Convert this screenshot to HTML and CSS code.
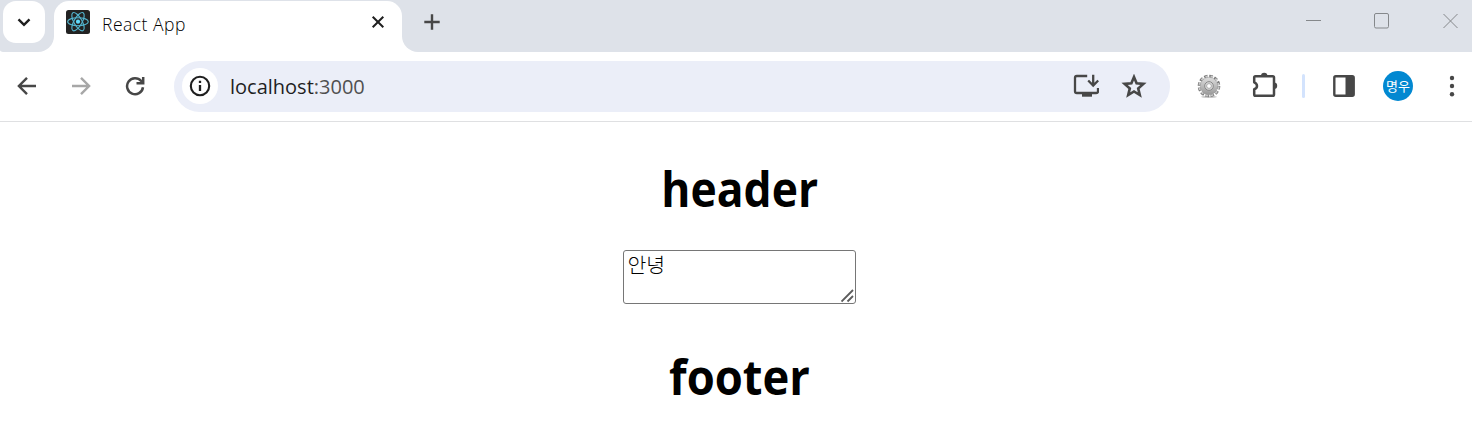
FILE: index.html
```html
<!DOCTYPE html>
<html lang="ko">
<head>
<meta charset="utf-8">
<title>React App</title>
<link rel="stylesheet" href="styles.css">
</head>
<body>
<div class="tabstrip">
  <div class="strip-left">
    <div class="tab-search"><svg width="42" height="42" viewBox="0 0 42 42"><path class="ink" d="M15.5 18.3l5.5 5.5 5.5-5.5" stroke-width="2.4"/></svg></div>
  </div>
  <div class="tab-slot">
    <div class="tab">
      <svg class="favicon" width="24" height="24" viewBox="0 0 24 24">
        <rect width="24" height="24" rx="2.5" fill="#222"/>
        <g fill="none" stroke="#53b5cf" stroke-width="1.15"><ellipse cx="12" cy="11.7" rx="10.3" ry="4"/><ellipse cx="12" cy="11.7" rx="10.3" ry="4" transform="rotate(60 12 11.7)"/><ellipse cx="12" cy="11.7" rx="10.3" ry="4" transform="rotate(120 12 11.7)"/></g>
        <circle cx="12" cy="11.7" r="2.1" fill="#61dafb"/>
      </svg>
      <span class="tab-title">React App</span>
      <svg class="tab-close" width="14" height="14" viewBox="0 0 14 14"><path class="ink" d="M1.7 1.7l10.6 10.6M12.3 1.7L1.7 12.3" stroke-width="2"/></svg>
    </div>
  </div>
  <div class="strip-right">
    <svg class="new-tab" width="16" height="16" viewBox="0 0 16 16"><path class="gray" d="M8 .3v15.4M.3 8h15.4" stroke-width="2.4"/></svg>
    <svg class="window-controls" width="156" height="18" viewBox="0 0 156 18"><g fill="none" stroke="#85888b"><path d="M2 8.5h15"/><rect x="70.5" y="1.5" width="14" height="14.5" rx="1.5"/><path d="M139.5 2l14 14M153.500 2l-14 14"/></g></svg>
  </div>
</div>
<div class="toolbar">
  <svg class="nav" width="20" height="20" viewBox="0 0 20 20"><path class="gray" d="M19 10H2.3M10 1.8L1.9 10l8.1 8.2" stroke-width="2.4"/></svg>
  <svg class="nav" width="20" height="20" viewBox="0 0 20 20"><path d="M1 10h16.7M10 1.8l8.1 8.2-8.1 8.2" fill="none" stroke="#a7a7a7" stroke-width="2.4"/></svg>
  <svg class="nav reload" width="20" height="20" viewBox="0 0 20 20"><path class="gray" d="M18 11.3A8 8 0 1 1 16.2 5L18 7M18.2 1v6.2h-6.7" stroke-width="2.5"/></svg>
  <div class="omnibox">
    <div class="site-info"><svg width="36" height="36" viewBox="0 0 36 36"><circle class="ink" cx="18" cy="18" r="9.2" stroke-width="2.1"/><path class="ink" d="M18 17v6M18 12.8v2.3" stroke-width="2.3"/></svg></div>
    <span class="url">localhost<span class="port">:3000</span></span>
    <svg class="install" width="26" height="24" viewBox="0 0 26 24"><path class="gray" d="M14.2 2H3.8Q2 2 2 3.8v13.4Q2 19 3.8 19h19.4Q25 19 25 17.2V14" stroke-width="2.3"/><path fill="#474747" d="M9 19h10v3.7H9z"/><path class="gray" d="M20.2.8v10M15.2 6.5l5 5 5-5" stroke-width="2.3"/></svg>
    <svg class="star" width="26" height="25" viewBox="0 0 26 25"><path class="gray" d="M13 3l2.6 6.3 6.8.6-5.2 4.5 1.6 6.7-5.8-3.6-5.8 3.6 1.6-6.7L3.6 9.9l6.8-.6z" stroke-width="2.6"/></svg>
  </div>
  <svg class="gear" width="24" height="25" viewBox="0 0 24 25">
    <defs><linearGradient id="metal" x2="0" y2="1"><stop stop-color="#dedede"/><stop offset=".5" stop-color="#bcbcbc"/><stop offset="1" stop-color="#999"/></linearGradient></defs>
    <ellipse cx="12" cy="22.8" rx="8" ry="1.3" fill="#ccc"/>
    <circle cx="12" cy="12" r="9.8" fill="none" stroke="#777" stroke-width="3" stroke-dasharray="3.4 1.73"/>
    <circle cx="12" cy="12" r="9.6" fill="none" stroke="#c8c8c8" stroke-width="2" stroke-dasharray="2.6 2.53" stroke-dashoffset="-.4"/>
    <circle cx="12" cy="12" r="8.7" fill="url(#metal)" stroke="#999" stroke-width=".5"/>
    <circle cx="12" cy="12" r="4.3" fill="#ddd" stroke="#858585"/>
    <circle cx="12" cy="12" r="2.4" fill="#fff" stroke="#999" stroke-width=".8"/>
  </svg>
  <svg class="puzzle" width="26" height="26" viewBox="0 0 26 26"><path class="gray" stroke-linejoin="round" d="M3.5 4.2h17.2q1.3 0 1.3 1.3v17q0 1.3-1.3 1.3H3.5q-1.3 0-1.3-1.3v-5.2Q5 16.5 5 14T2.2 10.3V5.5q0-1.3 1.3-1.3z" stroke-width="2.5"/><path fill="#474747" d="M9 4a3.2 3.2 0 0 1 6.4 0zM22 10.5a3.2 3.2 0 0 1 0 6.4z"/></svg>
  <div class="divider"></div>
  <svg class="panel" width="22" height="22" viewBox="0 0 22 22"><rect class="gray" x="1.3" y="1.3" width="19.4" height="19.4" rx="1.5" stroke-width="2.4"/><path fill="#474747" d="M12.5 1H21v20h-8.5z"/></svg>
  <div class="avatar">명우</div>
  <svg class="menu" width="6" height="24" viewBox="0 0 6 24" fill="#474747"><circle cx="3" cy="4" r="2.2"/><circle cx="3" cy="12" r="2.2"/><circle cx="3" cy="20.2" r="2.2"/></svg>
</div>
<main class="page">
  <h1 class="heading">header</h1>
  <div class="field-wrap">
    <textarea class="field" spellcheck="false">안녕</textarea>
    <svg class="grip" width="14" height="14" viewBox="0 0 14 14"><path d="M.5 12.5L12 1M6.500 12.500l5.500-5.500" fill="none" stroke="#5c5c5c" stroke-width="1.8"/></svg>
  </div>
  <h1 class="heading footer">footer</h1>
</main>
</body>
</html>
```
FILE: styles.css
```css
* { box-sizing: border-box; }
body { margin: 0; height: 440px; overflow: hidden; background: #fff; font-family: "Open Sans", "Noto Sans CJK KR", sans-serif; }
svg { display: block; flex: none; }
.ink { fill: none; stroke: #1f1f1f; }
.gray { fill: none; stroke: #474747; }
.tabstrip { display: flex; height: 52px; }
.strip-left { width: 54px; padding: 1px 0 0 3px; background: #dee2e9; border-bottom-right-radius: 16px; border-bottom-left-radius: 5px 2px; }
.tab-search { width: 42px; height: 42px; background: #fff; border-radius: 13px; }
.tab-slot { width: 348px; padding-top: 1px; background: linear-gradient(#dee2e9 22px, #fff 22px); }
.tab { display: flex; height: 51px; padding: 9px 17px 0 12px; background: #fff; border-radius: 15px 15px 0 0; }
.tab-title { margin: 2px 0 0 12px; font-size: 17.5px; line-height: 25px; font-weight: 300; color: #000; white-space: nowrap; letter-spacing: .5px; }
.tab-close { margin: 5px 0 0 auto; }
.strip-right { display: flex; flex: 1; padding: 12px 12px 0 22px; background: #dee2e9; border-bottom-left-radius: 16px; }
.new-tab { margin-top: 2px; }
.window-controls { margin-left: auto; }
.toolbar { display: flex; align-items: center; height: 70px; padding: 0 17px 1px; border-bottom: 1px solid #dfe0e2; }
.nav { margin-right: 34px; }
.nav.reload { margin-right: 29px; }
.omnibox { display: flex; align-items: center; width: 996px; height: 51px; padding: 0 23px 0 7.5px; background: #ebeef8; border-radius: 26px; }
.site-info { width: 36px; height: 36px; border-radius: 50%; background: #fff; }
.url { margin: 1px 0 0 12.5px; font-size: 20px; line-height: 28px; color: #1f1f1f; }
.port { color: #505050; }
.install { margin-left: auto; }
.star { margin-left: 22px; }
.gear { margin-left: 27px; }
.puzzle { margin: -2px 0 0 31px; }
.divider { width: 3px; height: 24px; margin-left: 24px; border-radius: 2px; background: #d3e3fd; }
.panel { margin-left: 28px; }
.avatar { display: flex; align-items: center; justify-content: center; flex: none; width: 30px; height: 30px; margin-left: 28px; border-radius: 50%; background: #0288d1; color: #fff; font: 13px/28px "Noto Sans CJK KR", sans-serif; padding-bottom: 1px; }
.menu { margin-left: 36px; }
.page { display: flex; flex-direction: column; align-items: center; padding: 35px 0 0 8px; }
.heading { margin: 0; font-size: 48px; line-height: 64px; font-weight: 700; color: #000; transform: scaleX(.925); }
.heading.footer { transform: scaleX(.945); }
.field-wrap { position: relative; margin: 29px 2px 41px 0; }
.field { display: block; width: 233px; height: 54px; padding: 1px 4px; border: 1px solid #767676; border-radius: 3px; font: 300 20.5px/24px "Noto Sans CJK KR", sans-serif; color: #000; resize: none; overflow: hidden; }
.grip { position: absolute; right: 1px; bottom: 1px; }
```
